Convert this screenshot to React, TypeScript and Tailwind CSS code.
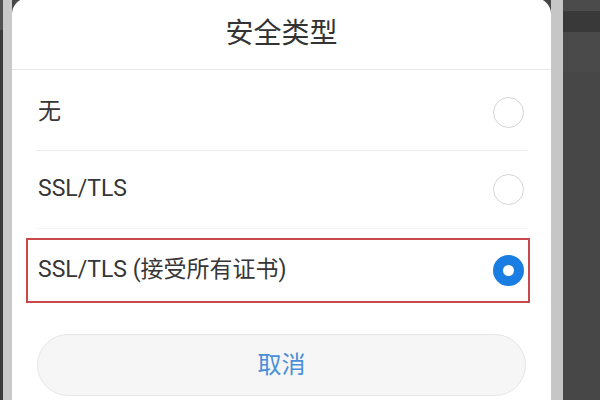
import React, { useState } from "react"

const options = ["无", "SSL/TLS", "SSL/TLS (接受所有证书)"]

const Radio = ({ checked }: { checked: boolean }) => {
  if (checked) {
    return <div className="h-[31px] w-[31px] rounded-full border-[10px] border-[#1a7de2] bg-white" />
  }
  return <div className="h-[31px] w-[31px] rounded-full border-[1.5px] border-[#d4d4d4] bg-white" />
}

const App = () => {
  const [selected, setSelected] = useState(2)

  return (
    <div
      className="flex h-[400px] w-[600px] overflow-hidden bg-[#474747]"
      style={{ fontFamily: "Roboto, 'Noto Sans CJK SC', sans-serif" }}
    >
      <div className="flex w-[3px] flex-col bg-[#3a3a3a]">
        <div className="h-[30px] bg-[#505050]" />
      </div>
      <div className="w-[9px] bg-[#c9c9c9]" />

      <div className="mt-[-2px] flex w-[539px] flex-col rounded-t-2xl bg-white">
        <div className="flex h-[71px] items-center justify-center text-[28px] text-[#333333]">安全类型</div>
        <div className="h-px bg-[#e8e8e8]" />

        <div className="flex h-[80px] items-center justify-between pl-[26px] pr-[27px] pt-1" onClick={() => setSelected(0)}>
          <span className="text-[23px] text-[#363636]">{options[0]}</span>
          <Radio checked={selected === 0} />
        </div>
        <div className="mx-6 h-px bg-[#ececec]" />

        <div className="flex h-[77px] items-center justify-between pl-[26px] pr-[27px]" onClick={() => setSelected(1)}>
          <span className="text-[23px] text-[#363636]">{options[1]}</span>
          <Radio checked={selected === 1} />
        </div>
        <div className="mx-6 h-px bg-[#f2f5f7]" />

        <div className="relative flex h-[78px] items-center justify-between pl-[26px] pr-[27px] pt-1" onClick={() => setSelected(2)}>
          <span className="text-[23px] text-[#363636]">{options[2]}</span>
          <Radio checked={selected === 2} />
          <div className="pointer-events-none absolute bottom-[4px] left-[14px] right-[21px] top-[9px] border-2 border-[#c8484b]" />
        </div>

        <div className="mx-[25px] mt-[27px] flex h-[62px] items-center justify-center rounded-full border border-[#e6e6e6] bg-[#f6f6f6] text-[24px] text-[#4a8fd9]">
          取消
        </div>
      </div>

      <div className="w-[12px] bg-[#c6c6c6]" />
      <div className="flex flex-1 flex-col">
        <div className="h-[11px] bg-[#4b4b4b]" />
        <div className="h-[21px] bg-[#393939]" />
        <div className="h-[40px] bg-[#4a4a4a]" />
        <div className="flex-1 bg-[#474747]" />
      </div>
    </div>
  )
}

export default App
